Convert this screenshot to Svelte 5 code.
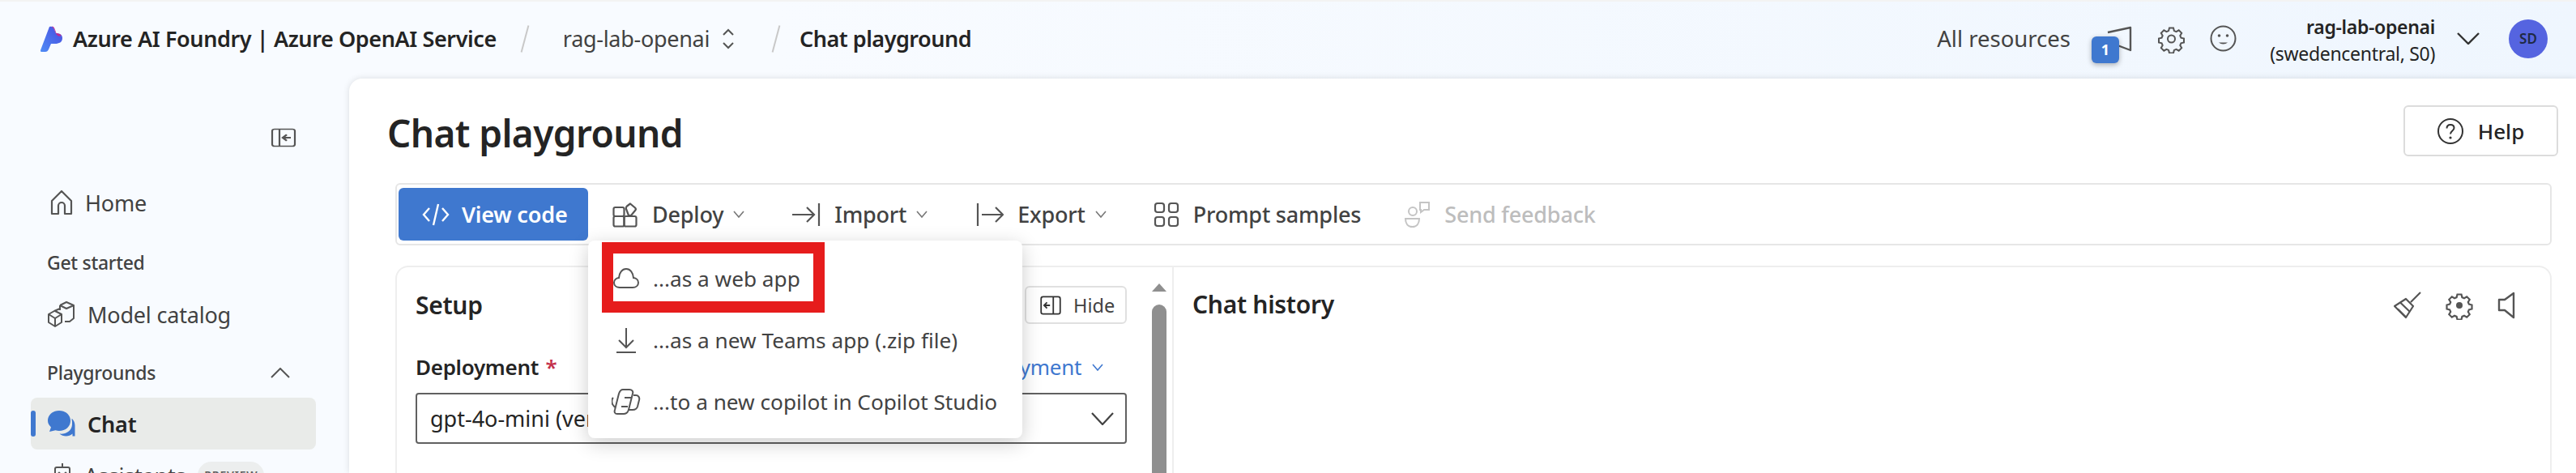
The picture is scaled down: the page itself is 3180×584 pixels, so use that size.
<script lang="ts">
  const gearPath =
    'M13.5 2.5h5l.9 3.6 2.6 1.1 3.2-1.9 3.5 3.5-1.9 3.2 1.1 2.6 3.6.9v5l-3.6.9-1.1 2.6 1.9 3.2-3.5 3.5-3.2-1.9-2.6 1.1-.9 3.6h-5l-.9-3.6-2.6-1.1-3.2 1.9-3.5-3.5 1.9-3.2-1.1-2.6-3.6-.9v-5l3.6-.9 1.1-2.6-1.9-3.2 3.5-3.5 3.2 1.9 2.6-1.1z';

  const menuItems = [
    { icon: 'cloud', label: '...as a web app' },
    { icon: 'download', label: '...as a new Teams app (.zip file)' },
    { icon: 'copilot', label: '...to a new copilot in Copilot Studio' }
  ];
</script>

<div class="page">
  <header class="top">
    <svg class="logo" viewBox="0 0 28 32" width="28" height="32">
      <defs>
        <linearGradient id="logo-fill" x1="0" y1="1" x2="1" y2="0">
          <stop offset="0" stop-color="#4f8cf5" />
          <stop offset="0.7" stop-color="#4a5fe6" />
          <stop offset="1" stop-color="#6a4fd8" />
        </linearGradient>
      </defs>
      <path d="M11 1c3-1 5 0 6 3l2 5c5 0 8 2 8 6 0 5-4 7-9 7h-5l-3 7c-1 2-2 3-4 3H1c-1 0-1-1-1-2z" fill="url(#logo-fill)" />
      <path d="M14 .5c2 0 3 1.500 3.500 3l2 5.500c2.500.2 4.500 1 6 2.500-1 1.500-3 1.500-4.500.5-2-1.500-3-5-4-8z" fill="#c42b8e" />
    </svg>
    <span class="brand">Azure AI Foundry | Azure OpenAI Service</span>
    <span class="slash first"></span>
    <span class="crumb">rag-lab-openai</span>
    <svg class="updown" viewBox="0 0 16 32" width="16" height="32" fill="none" stroke="#555" stroke-width="2">
      <path d="M2 11l6-6 6 6M2 21l6 6 6-6" />
    </svg>
    <span class="slash second"></span>
    <span class="crumb current">Chat playground</span>

    <div class="top-right">
      <span class="all">All resources</span>
      <div class="announce">
        <svg viewBox="0 0 32 32" width="32" height="32" fill="none" stroke="#555" stroke-width="2.4" stroke-linejoin="round">
          <path d="M2 8 30 2v28L14 24" />
        </svg>
        <span class="badge">1</span>
      </div>
      <svg class="gear" viewBox="0 0 32 36" width="33" height="36" fill="none" stroke="#555" stroke-width="2">
        <path d={gearPath} transform="translate(0 2)" />
        <circle cx="16" cy="18" r="4.500" />
      </svg>
      <svg class="smile" viewBox="0 0 33 33" width="33" height="33" fill="none" stroke="#555" stroke-width="2">
        <circle cx="16.500" cy="16.500" r="15" />
        <circle cx="11.500" cy="13" r="1.800" fill="#555" stroke="none" />
        <circle cx="21.500" cy="13" r="1.800" fill="#555" stroke="none" />
        <path d="M11 21.500c3 2.500 8 2.500 11 0" fill="#555" stroke="none" />
      </svg>
      <div class="account">
        <strong>rag-lab-openai</strong>
        <span>(swedencentral, S0)</span>
      </div>
      <svg class="acct-chevron" viewBox="0 0 28 15" width="28" height="15" fill="none" stroke="#333" stroke-width="2.400">
        <path d="M1 1l13 13L27 1" />
      </svg>
      <span class="avatar">SD</span>
    </div>
  </header>

  <div class="body">
    <aside class="side">
      <div class="collapse-row">
        <svg viewBox="0 0 32 32" width="32" height="24" fill="none" stroke="#555" stroke-width="2.200" preserveAspectRatio="none">
          <rect x="2" y="2" width="28" height="28" rx="3" />
          <path d="M11 2v28" />
          <path d="M25 16H16M20 11l-5 5 5 5" stroke-width="2.600" />
        </svg>
      </div>

      <a class="nav">
        <svg viewBox="0 0 28 32" width="28" height="32" fill="none" stroke="#555" stroke-width="2.200" stroke-linejoin="round">
          <path d="M2 14 14 2l12 12v16H18V20a4 4 0 0 0-8 0v10H2z" />
        </svg>
        Home
      </a>

      <div class="heading get">Get started</div>
      <a class="nav catalog">
        <svg viewBox="0 0 34 32" width="34" height="32" fill="none" stroke="#555" stroke-width="2" stroke-linejoin="round">
          <path d="M15 9 8 12l-7 4v10l8 5 8-5V16l-8-4" />
          <path d="M1 16l8 5 8-5M9 21v10" />
          <path d="M15 5l8-4 9 4v16l-5 4h-6M15 5l8 4 9-4M15 5v6" />
        </svg>
        Model catalog
      </a>

      <div class="heading play">
        Playgrounds
        <svg viewBox="0 0 24 13" width="24" height="13" fill="none" stroke="#555" stroke-width="2">
          <path d="M1 12 12 1l11 11" />
        </svg>
      </div>
      <a class="nav active">
        <svg viewBox="0 0 34 32" width="34" height="32" fill="#3f78cf">
          <path d="M14 0c8 0 14 5.500 14 12.500S22 25 14 25c-1.500 0-3-.2-4.500-.7L2 26l2-5.500C1.500 18 0 15.500 0 12.500 0 5.500 6 0 14 0z" />
          <path d="M30 10c2.500 2.500 3.500 5.500 3.500 8.500v13h-3v-3c-2 2-5 3-8 3s-6-1-8-3c7 1 15-3 15.500-11 .2-2.500 0-5-.5-7.500z" />
        </svg>
        Chat
      </a>
      <a class="nav">
        <svg class="bot" viewBox="0 0 20 32" width="20" height="32" fill="none" stroke="#555" stroke-width="2">
          <path d="M10 1v5" />
          <rect x="1" y="6" width="18" height="22" rx="2" />
          <circle cx="6" cy="13" r="1.500" fill="#555" stroke="none" />
          <circle cx="14" cy="13" r="1.500" fill="#555" stroke="none" />
        </svg>
        Assistants
        <span class="preview">PREVIEW</span>
      </a>
    </aside>

    <main class="main">
      <div class="title-row">
        <h1>Chat playground</h1>
        <button class="help">
          <svg viewBox="0 0 32 32" width="32" height="32" fill="none" stroke="#333" stroke-width="2">
            <circle cx="16" cy="16" r="15" />
            <path d="M11.500 12.500c0-3 2-4.500 4.500-4.500s4.500 1.500 4.500 4c0 3.500-4.500 3.500-4.500 7.500" />
            <circle cx="16" cy="24" r="1.600" fill="#333" stroke="none" />
          </svg>
          Help
        </button>
      </div>

      <div class="toolbar">
        <button class="view-code">
          <svg viewBox="0 0 34 30" width="34" height="30" fill="none" stroke="#fff" stroke-width="2.400">
            <path d="M9 7 2 15l7 8M25 7l7 8-7 8M20 2l-6 26" />
          </svg>
          View code
        </button>

        <div class="tool deploy">
          <svg viewBox="0 0 32 32" width="32" height="32" fill="none" stroke="#555" stroke-width="2.200" stroke-linejoin="round">
            <rect x="1.500" y="7" width="13" height="11" rx="2" />
            <rect x="1.500" y="18" width="13" height="12.500" rx="2" />
            <rect x="14.500" y="18" width="15" height="12.500" rx="2" />
            <path d="M22 2.500l6 5c1 1 1 2.500 0 3.500l-5 6h-3l-3-8c-.5-1.500 0-2.500 1-3.500z" />
          </svg>
          <span>Deploy</span>
          <svg class="chev" viewBox="0 0 14 9" width="14" height="9" fill="none" stroke="#777" stroke-width="1.600"><path d="M1 1l6 7 6-7" /></svg>

          <div class="menu">
            {#each menuItems as item}
              <div class="menu-item">
                <span class="menu-icon">
                  {#if item.icon === 'cloud'}
                    <svg viewBox="0 0 32 26" width="32" height="26" fill="none" stroke="#555" stroke-width="2">
                      <path d="M8 24C4 24 1 21.500 1 18c0-3 2.500-5.500 6-6C7.500 5.500 11 1 16 1s8.500 4.500 9 11c3.500.5 6 3 6 6 0 3.500-3 6-7 6z" />
                    </svg>
                  {:else if item.icon === 'download'}
                    <svg viewBox="0 0 26 32" width="26" height="32" fill="none" stroke="#555" stroke-width="2">
                      <path d="M13 1v24M4 16l9 9 9-9M1 31h24" />
                    </svg>
                  {:else}
                    <svg viewBox="0 0 36 34" width="36" height="34" fill="none" stroke="#555" stroke-width="2" stroke-linejoin="round">
                      <path d="M14 2h8c3 0 5 2 4 5l-5 20c-1 3-3 5-6 5H7c-3 0-4-2-3-5l5-20c1-3 2-5 5-5z" />
                      <path d="M27 9h3c3 0 5 3 4 6l-2 8c-1 3-3 4-6 4h-6M2 12c-2 2-2 5-1 8l3 4M16 12h8M12 23h8" />
                    </svg>
                  {/if}
                </span>
                {item.label}
              </div>
            {/each}
            <span class="callout"></span>
          </div>
        </div>

        <div class="tool import">
          <svg viewBox="0 0 36 32" width="36" height="32" fill="none" stroke="#555" stroke-width="2.200">
            <path d="M1 16h27M19 7l9 9-9 9M34 2v28" />
          </svg>
          <span>Import</span>
          <svg class="chev" viewBox="0 0 14 9" width="14" height="9" fill="none" stroke="#777" stroke-width="1.600"><path d="M1 1l6 7 6-7" /></svg>
        </div>

        <div class="tool export">
          <svg viewBox="0 0 34 32" width="34" height="32" fill="none" stroke="#555" stroke-width="2.200">
            <path d="M2 2v28M7 16h26M24 7l9 9-9 9" />
          </svg>
          <span>Export</span>
          <svg class="chev" viewBox="0 0 14 9" width="14" height="9" fill="none" stroke="#777" stroke-width="1.600"><path d="M1 1l6 7 6-7" /></svg>
        </div>

        <div class="tool prompt">
          <svg viewBox="0 0 32 32" width="32" height="32" fill="none" stroke="#555" stroke-width="2.200">
            <rect x="2" y="2" width="11" height="11" rx="3" />
            <rect x="19" y="2" width="11" height="11" rx="3" />
            <rect x="2" y="19" width="11" height="11" rx="3" />
            <rect x="19" y="19" width="11" height="11" rx="3" />
          </svg>
          <span>Prompt samples</span>
        </div>

        <div class="tool disabled">
          <svg viewBox="0 0 32 34" width="32" height="34" fill="none" stroke="#c4c4c4" stroke-width="2">
            <circle cx="10" cy="13" r="5" />
            <path d="M1 22h17c0 6-3 10-8.500 10S1 28 1 22z" />
            <path d="M19 2h11v9h-6l-4 3v-3h-1z" />
          </svg>
          <span>Send feedback</span>
        </div>
      </div>

      <div class="workspace">
        <section class="setup-panel">
          <div class="setup">
            <div class="setup-head">
              <h2>Setup</h2>
              <button class="hide">
                <svg viewBox="0 0 32 32" width="32" height="32" fill="none" stroke="#333" stroke-width="2.200">
                  <rect x="1.500" y="3" width="29" height="26" rx="3" />
                  <path d="M20 3v26M15 16H7M10.500 11.500 6 16l4.500 4.500" />
                </svg>
                Hide
              </button>
            </div>
            <div class="deploy-row">
              <label for="deployment">Deployment <em>*</em></label>
              <span class="create">
                + Create new deployment
                <svg viewBox="0 0 14 9" width="14" height="9" fill="none" stroke="#3f78cf" stroke-width="1.600"><path d="M1 1l6 7 6-7" /></svg>
              </span>
            </div>
            <div class="select" id="deployment">
              <span>gpt-4o-mini (version:2024-07-18)</span>
              <svg viewBox="0 0 28 16" width="28" height="16" fill="none" stroke="#424242" stroke-width="2.200"><path d="M1 1l13 14L27 1" /></svg>
            </div>
          </div>
          <div class="scroll">
            <span class="arrow"></span>
            <span class="thumb"></span>
          </div>
        </section>

        <section class="history">
          <h2>Chat history</h2>
          <div class="history-tools">
            <svg viewBox="0 0 34 34" width="34" height="34" fill="none" stroke="#555" stroke-width="2.200" stroke-linejoin="round">
              <path d="M33 1 21 13M15 9 1 18l14 14 9-14z" />
              <path d="M8 13.500 20 25M5 21.500l10 10" />
            </svg>
            <svg viewBox="0 0 34 36" width="34" height="36" fill="none" stroke="#555" stroke-width="2.200">
              <path d={gearPath} transform="translate(1 2)" />
              <circle cx="17" cy="18" r="4" fill="#555" stroke="none" />
            </svg>
            <svg viewBox="0 0 22 34" width="22" height="34" fill="none" stroke="#555" stroke-width="2.400" stroke-linejoin="round">
              <path d="M20 2 9 10H2v13h7l11 9z" />
            </svg>
          </div>
        </section>
      </div>
    </main>
  </div>
</div>

<style>
  :global(body) {
    margin: 0;
    background: #f8fbff;
  }

  .page {
    width: 3180px;
    height: 584px;
    overflow: hidden;
    display: flex;
    flex-direction: column;
    font-family: 'Noto Sans', 'Open Sans', sans-serif;
    color: #242424;
    background: linear-gradient(90deg, #f8fbff 0%, #f8fbff 30%, #eff6fe 100%);
    border-top: 2px solid #f3f3f3;
    box-sizing: border-box;
  }

  svg {
    flex: none;
    display: block;
  }

  /* top bar */
  .top {
    height: 95px;
    flex: none;
    box-sizing: border-box;
    display: flex;
    align-items: center;
    padding: 0 0 4px 50px;
  }

  .brand {
    margin-left: 12px;
    font-weight: 600;
    font-size: 27px;
    letter-spacing: -0.4px;
  }

  .slash {
    width: 2px;
    height: 34px;
    background: #c8c8c8;
    transform: rotate(15deg);
  }

  .slash.first {
    margin: 0 46px 0 34px;
  }

  .slash.second {
    margin: 0 28px 0 50px;
  }

  .crumb {
    color: #424242;
    font-size: 27px;
    letter-spacing: -0.3px;
  }

  .crumb.current {
    color: #242424;
    font-weight: 600;
    letter-spacing: -0.5px;
  }

  .updown {
    margin-left: 15px;
  }

  .top-right {
    margin-left: auto;
    display: flex;
    align-items: center;
    padding-right: 35px;
  }

  .all {
    font-size: 27.500px;
    color: #424242;
  }

  .announce {
    position: relative;
    width: 32px;
    height: 32px;
    margin: 0 32px 0 44px;
  }

  .badge {
    position: absolute;
    left: -18px;
    top: 13px;
    width: 34px;
    height: 33px;
    border-radius: 6px;
    background: #3f78cf;
    color: #fff;
    font-size: 18px;
    font-weight: 700;
    display: flex;
    align-items: center;
    justify-content: center;
    box-shadow: 0 2px 6px rgba(0, 0, 0, 0.3);
  }

  .smile {
    margin-left: 31px;
  }

  .account {
    width: 245px;
    display: flex;
    flex-direction: column;
    align-items: flex-end;
    gap: 2px;
    margin-top: 4px;
    font-size: 23px;
    line-height: 31px;
    letter-spacing: -0.3px;
  }

  .account strong {
    font-weight: 600;
  }

  .acct-chevron {
    margin: 0 36px 0 27px;
  }

  .avatar {
    width: 48px;
    height: 48px;
    border-radius: 50%;
    background: #5564e0;
    color: #1f2a44;
    font-size: 17px;
    font-weight: 600;
    display: flex;
    align-items: center;
    justify-content: center;
  }

  .body {
    flex: 1;
    min-height: 0;
    display: flex;
  }

  /* left nav */
  .side {
    width: 431px;
    flex: none;
    box-sizing: border-box;
    padding: 61px 41px 0 38px;
    font-size: 27px;
    color: #424242;
  }

  .collapse-row {
    display: flex;
    justify-content: flex-end;
    padding-right: 24px;
    height: 24px;
    margin-bottom: 36px;
  }

  .nav {
    height: 64px;
    display: flex;
    align-items: center;
    gap: 15px;
    padding-left: 24px;
    border-radius: 8px;
    position: relative;
    letter-spacing: -0.2px;
  }

  .nav.active {
    background: #e9ebe9;
    padding-left: 21px;
    color: #242424;
    font-weight: 600;
    margin-top: 3px;
  }

  .nav.active::before {
    content: '';
    position: absolute;
    left: 0;
    top: 16px;
    width: 6px;
    height: 32px;
    border-radius: 3px;
    background: #3f78cf;
  }

  .nav.catalog {
    padding-left: 21px;
    margin-top: 4px;
  }

  .nav .bot {
    margin: 0 2px 0 5px;
  }

  .preview {
    padding: 0 8px;
    height: 34px;
    line-height: 34px;
    border-radius: 17px;
    background: #eceeee;
    font-size: 14px;
    font-weight: 600;
    letter-spacing: 0.8px;
    color: #616161;
  }

  .heading {
    height: 56px;
    padding-left: 20px;
    display: flex;
    align-items: center;
    justify-content: space-between;
    font-size: 23px;
    letter-spacing: -0.3px;
    font-weight: 500;
    color: #424242;
  }

  .heading svg {
    margin-right: 32px;
  }

  .heading.get {
    margin-top: 14px;
  }

  .heading.play {
    margin-top: 12px;
  }

  /* main card */
  .main {
    flex: 1;
    min-width: 0;
    background: #fff;
    border-top-left-radius: 16px;
    box-shadow: 0 0 8px rgba(0, 0, 0, 0.12);
    padding: 33px 22px 0 47px;
  }

  .title-row {
    height: 63px;
    display: flex;
    align-items: center;
    justify-content: space-between;
  }

  h1 {
    margin: 4px 0 0;
    font-size: 46px;
    font-weight: 600;
    letter-spacing: -0.6px;
  }

  button {
    font-family: inherit;
  }

  .help {
    width: 191px;
    height: 63px;
    box-sizing: border-box;
    display: flex;
    align-items: center;
    justify-content: center;
    gap: 18px;
    background: #fff;
    border: 2px solid #dcdcdc;
    border-radius: 6px;
    font-size: 26px;
    font-weight: 500;
    color: #242424;
  }

  .toolbar {
    margin: 33px 8px 0 10px;
    height: 77px;
    box-sizing: border-box;
    border: 2px solid #e6e6e6;
    border-radius: 6px;
    padding: 4px 2px;
    display: flex;
    align-items: stretch;
    position: relative;
    z-index: 2;
  }

  .view-code {
    width: 234px;
    border: none;
    border-radius: 6px;
    background: #3f78cf;
    color: #fff;
    font-size: 27px;
    font-weight: 600;
    letter-spacing: -0.2px;
    display: flex;
    align-items: center;
    gap: 15px;
    padding: 0 0 0 29px;
  }

  .tool {
    display: flex;
    align-items: center;
    gap: 17px;
    font-size: 27px;
    font-weight: 500;
    letter-spacing: -0.2px;
    color: #424242;
    margin-left: 60px;
    position: relative;
  }

  .tool .chev {
    margin-left: -5px;
  }

  .tool.deploy {
    margin-left: 30px;
  }

  .tool.import {
    margin-left: 58px;
  }

  .tool.prompt {
    margin-left: 58px;
  }

  .tool.disabled {
    color: #bdbdbd;
    margin-left: 54px;
  }

  .menu {
    position: absolute;
    left: -30px;
    top: 65px;
    width: 536px;
    height: 244px;
    box-sizing: border-box;
    padding-top: 9px;
    background: #fff;
    border-radius: 8px;
    box-shadow: 0 6px 24px rgba(0, 0, 0, 0.2);
    font-weight: 400;
    font-size: 26.200px;
    letter-spacing: 0;
  }

  .menu-item {
    height: 76px;
    display: flex;
    align-items: center;
    gap: 15px;
  }

  .menu-icon {
    width: 36px;
    margin-left: 29px;
    display: flex;
    justify-content: center;
  }

  .callout {
    position: absolute;
    left: 17px;
    top: 2px;
    width: 275px;
    height: 87px;
    box-sizing: border-box;
    border: 14px solid #e61c1c;
  }

  /* setup + history */
  .workspace {
    margin: 25px 8px 0 10px;
    height: 300px;
    display: flex;
    box-sizing: border-box;
    border: 2px solid #eee;
    border-bottom: none;
    border-radius: 16px 16px 0 0;
  }

  .setup-panel {
    width: 959px;
    flex: none;
    box-sizing: border-box;
    border-right: 2px solid #eee;
    display: flex;
  }

  .setup {
    width: 878px;
    margin-left: 23px;
    padding-top: 23px;
  }

  .setup-head {
    height: 47px;
    display: flex;
    align-items: center;
    justify-content: space-between;
  }

  h2 {
    margin: 0;
    font-size: 30px;
    font-weight: 600;
    letter-spacing: -0.3px;
    color: #242424;
  }

  .hide {
    width: 126px;
    height: 47px;
    box-sizing: border-box;
    border: 2px solid #e0e0e0;
    border-radius: 6px;
    background: #fff;
    display: flex;
    align-items: center;
    gap: 12px;
    padding: 0 0 0 14px;
    font-size: 23.500px;
    color: #424242;
  }

  .hide svg {
    width: 32px;
    height: 26px;
  }

  .deploy-row {
    margin-top: 29px;
    height: 48px;
    display: flex;
    align-items: center;
    justify-content: space-between;
    padding-right: 29px;
  }

  label {
    font-size: 26px;
    font-weight: 600;
    letter-spacing: -0.3px;
  }

  label em {
    color: #c4314b;
    font-style: normal;
    margin-left: 2px;
  }

  .create {
    display: flex;
    align-items: center;
    gap: 13px;
    font-size: 26px;
    letter-spacing: -0.3px;
    color: #3f78cf;
  }

  .select {
    margin-top: 8px;
    height: 63px;
    box-sizing: border-box;
    border: 2px solid #616161;
    border-radius: 4px;
    display: flex;
    align-items: center;
    justify-content: space-between;
    padding: 0 14px 0 16px;
    font-size: 27px;
  }

  .scroll {
    width: 18px;
    margin-left: 31px;
    display: flex;
    flex-direction: column;
    align-items: center;
    padding-top: 20px;
  }

  .arrow {
    width: 0;
    height: 0;
    border-left: 9px solid transparent;
    border-right: 9px solid transparent;
    border-bottom: 10px solid #8f8f8f;
  }

  .thumb {
    margin-top: 16px;
    width: 18px;
    flex: 1;
    background: #8f8f8f;
    border-radius: 9px 9px 0 0;
  }

  .history {
    flex: 1;
    display: flex;
    justify-content: space-between;
    align-items: flex-start;
    padding: 25px 43px 0 23px;
  }

  .history-tools {
    display: flex;
    align-items: center;
    gap: 30px;
    margin-top: 4px;
  }
</style>
